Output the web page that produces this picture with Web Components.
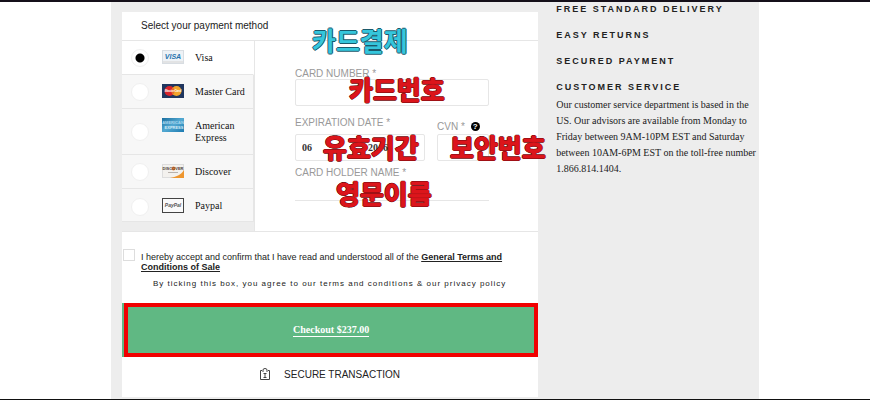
<!DOCTYPE html>
<html lang="en">
<head>
<meta charset="utf-8">
<meta name="viewport" content="width=device-width, initial-scale=1">
<title>Checkout</title>
<style>
  * { box-sizing: border-box; }
  body {
    margin: 0;
    background: #fff;
    color: #222;
    font-family: "Liberation Sans", Arial, sans-serif;
    font-size: 10px;
    --serif: "Liberation Serif", "Times New Roman", serif;
    --line: #e6e6e6;
    --grey: #ededed;
    --label: #999;
  }
</style>
</head>
<body>
  <checkout-page>
    <checkout-card>
      <span slot="title">Select your payment method</span>
      <payment-methods slot="methods"></payment-methods>
      <card-form slot="form"></card-form>
      <terms-check slot="terms"></terms-check>
      <checkout-button slot="submit">Checkout $237.00</checkout-button>
      <secure-note slot="footer">SECURE TRANSACTION</secure-note>
    </checkout-card>
    <help-list slot="aside">
      <help-item heading="FREE STANDARD DELIVERY"></help-item>
      <help-item heading="EASY RETURNS"></help-item>
      <help-item heading="SECURED PAYMENT"></help-item>
      <help-item heading="CUSTOMER SERVICE">Our customer service department is based in the US. Our advisors are available from Monday to Friday between 9AM-10PM EST and Saturday between 10AM-6PM EST on the toll-free number 1.866.814.1404.</help-item>
    </help-list>
  </checkout-page>

<script>
// Small base: every component only gives its markup
class BaseElement extends HTMLElement {
  constructor() {
    super();
    this.attachShadow({ mode: 'open' })
  }

  connectedCallback() {
    this.shadowRoot.innerHTML = `<style>* { box-sizing: border-box; }</style>${this.render()}`
  }
}

class CheckoutPage extends BaseElement {
  render() {
    return `
    <style>
      :host {
        display: flex;
        min-height: 100vh;
        border-top: 2px solid #15101a;
        border-bottom: 1px solid #111;
        box-sizing: border-box;
      }
      main {
        display: grid;
        grid-template-columns: minmax(0, 17fr) minmax(0, 8fr);
        gap: 18px;
        width: 100%;
        max-width: 648px;
        margin: 0 auto;
        padding: 10px 7px 2px 11px;
        background: var(--grey);
      }
      aside { margin: -9px -6px 0 0; }
    </style>
    <main>
      <slot></slot>
      <aside><slot name="aside"></slot></aside>
    </main>
    `
  }
}

class CheckoutCard extends BaseElement {
  render() {
    return `
    <style>
      :host { display: block; background: #fff; }
      h1 {
        margin: 0;
        padding: 0 19px;
        border-bottom: 1px solid var(--line);
        font-size: 10px;
        font-weight: normal;
        line-height: 28px;
      }
      .payment {
        display: grid;
        grid-template-columns: 132px 1fr;
        border-bottom: 1px solid var(--line);
      }
      .methods { background: var(--grey); }
    </style>
    <h1><slot name="title"></slot></h1>
    <div class="payment">
      <div class="methods"><slot name="methods"></slot></div>
      <slot name="form"></slot>
    </div>
    <slot name="terms"></slot>
    <slot name="submit"></slot>
    <slot name="footer"></slot>
    `
  }
}

class CardLogo extends BaseElement {
  render() {
    const logos = {
      visa: `
        <rect x=".5" y=".5" width="21" height="13" fill="#eef2f6" stroke="#d8dde2"/>
        <rect x="1" y="11" width="20" height="2" fill="#e2e3e4"/>
        <text x="11" y="9" font-size="7" font-weight="bold" font-style="italic" fill="#2672ad" text-anchor="middle">VISA</text>`,
      master: `
        <rect width="22" height="14" fill="#20365f"/>
        <circle cx="7.5" cy="7" r="5" fill="#d8242c"/>
        <circle cx="14.5" cy="7" r="5" fill="#f2a52c"/>
        <path d="M11 3.4a5 5 0 0 1 0 7.2a5 5 0 0 1 0-7.2" fill="#e66b2a"/>
        <text x="11" y="8" font-size="3" font-weight="bold" font-style="italic" fill="#fff" text-anchor="middle">MasterCard</text>`,
      amex: `
        <defs><linearGradient id="g" x1="0" y1="0" x2="1" y2="1"><stop stop-color="#1b6e9f"/><stop offset=".5" stop-color="#53a9d2"/><stop offset="1" stop-color="#1c79b0"/></linearGradient></defs>
        <rect width="22" height="14" fill="url(#g)"/>
        <text x="11" y="6" font-size="4" font-weight="bold" fill="#a9d7ee" text-anchor="middle">AMERICAN</text>
        <text x="12" y="11" font-size="4" font-weight="bold" fill="#d5edf8" text-anchor="middle">EXPRESS</text>`,
      discover: `
        <rect x=".5" y=".5" width="21" height="13" fill="#f3f1ee" stroke="#ddd"/>
        <path d="M22 6v8H8C14 13 19 11 22 6z" fill="#ee962f"/>
        <circle cx="11.5" cy="4.5" r="2" fill="#ee8133"/>
        <text x="11" y="6" font-size="4" font-weight="bold" fill="#4a3a34" text-anchor="middle">DISCOVER</text>
        <path d="M6 8.5h10" stroke="#b8b2ad" stroke-width="1"/>`,
      paypal: `
        <rect x=".5" y=".5" width="21" height="14" fill="#fafafa" stroke="#444"/>
        <text x="11" y="9" font-size="5" font-weight="bold" font-style="italic" fill="#555" text-anchor="middle">PayPal</text>`
    }
    const height = this.getAttribute('type') === 'paypal' ? 15 : 14
    return `
    <style>
      :host { display: block; }
      svg { display: block; font-family: "Liberation Sans", Arial, sans-serif; }
    </style>
    <svg width="22" height="${height}" viewBox="0 0 22 ${height}" aria-hidden="true">${logos[this.getAttribute('type')]}</svg>
    `
  }
}

// All radios live in the same shadow root so they stay one group
class PaymentMethods extends BaseElement {
  render() {
    const methods = [
      ['visa', 'Visa'],
      ['master', 'Master Card'],
      ['amex', 'American Express'],
      ['discover', 'Discover'],
      ['paypal', 'Paypal']
    ]
    const rows = methods.map(([type, name], i) => `
      <label>
        <input type="radio" name="method" value="${type}" ${i === 0 ? 'checked' : ''}>
        <card-logo type="${type}"></card-logo>
        <span>${name}</span>
      </label>`).join('')

    return `
    <style>
      :host { display: block; }
      label {
        display: grid;
        grid-template-columns: 18px 22px 1fr;
        gap: 11px;
        align-items: start;
        padding: 9px 4px 10px 11px;
        border-right: 1px solid var(--line);
        border-bottom: 1px solid var(--line);
        background: #f7f7f7;
        font: 10px/12px var(--serif);
        color: #111;
      }
      label:has(:checked) { background: #fff; border-right-color: #fff; }
      label:last-of-type { padding-bottom: 8px; }
      input {
        appearance: none;
        align-self: center;
        width: 18px;
        height: 18px;
        margin: -2px 0 -4px -2px;
        border: 1px solid #f0f0f0;
        border-radius: 50%;
        background: #fff;
      }
      input:checked { background: radial-gradient(circle, #000 4px, #fff 5px); }
      span { padding-top: 2px; }
    </style>
    ${rows}
    `
  }
}

class CardForm extends BaseElement {
  render() {
    return `
    <style>
      :host {
        display: block;
        position: relative;
        padding: 27px 49px 30px 40px;
        border-left: 1px solid var(--line);
        background: #fff;
      }
      form { display: grid; grid-template-columns: 130px 1fr; column-gap: 12px; }
      .wide { grid-column: 1 / -1; }
      label, legend {
        display: block;
        padding: 0;
        font-size: 10px;
        line-height: 11px;
        color: var(--label);
        white-space: nowrap;
      }
      fieldset { margin: 0; padding: 0; border: 0; min-width: 0; }
      input, .selects {
        display: block;
        width: 100%;
        height: 27px;
        border: 1px solid var(--line);
        border-radius: 2px;
        background: #fff;
      }
      .number { margin-bottom: 11px; }
      .selects { display: flex; margin: 6px 0; padding-left: 6px; }
      .selects select {
        appearance: none;
        flex: 1;
        min-width: 0;
        padding: 0;
        border: 0;
        background: none;
        font: bold 10px/12px var(--serif);
        color: #333;
      }
      .selects svg { align-self: center; width: 8px; height: 5px; margin-right: 12px; }
      .selects select:first-child { flex: none; width: 46px; }
      .cvn { display: flex; align-items: center; gap: 6px; height: 17px; padding-top: 2px; }
      .cvn button {
        width: 9px;
        height: 9px;
        padding: 0;
        border: 0;
        border-radius: 50%;
        background: #000;
        color: #fff;
        font: bold 8px/9px "Liberation Sans", Arial, sans-serif;
      }
      .holder { height: 23px; border-width: 0 0 1px; border-radius: 0; }
      /* notes drawn over the fields */
      call-out { position: absolute; }
      .n1 { left: 57px; top: -19px; }
      .n2 { left: 94px; top: 30px; }
      .n3 { left: 68px; top: 88px; }
      .n4 { left: 195px; top: 88px; }
      .n5 { left: 81px; top: 134px; }
    </style>
    <form>
      <div class="wide">
        <label for="number">CARD NUMBER *</label>
        <input id="number" class="number" inputmode="numeric">
      </div>
      <fieldset>
        <legend>EXPIRATION DATE *</legend>
        <div class="selects">
          <select aria-label="Month"><option>06</option></select>
          <svg viewBox="0 0 8 5"><path d="M1 1l3 3 3-3" fill="none" stroke="#777"/></svg>
          <select aria-label="Year"><option>2016</option></select>
        </div>
      </fieldset>
      <div>
        <div class="cvn"><label for="cvn">CVN *</label><button type="button" aria-label="Help">?</button></div>
        <input id="cvn" inputmode="numeric">
      </div>
      <div class="wide">
        <label for="holder">CARD HOLDER NAME *</label>
        <input id="holder" class="holder">
      </div>
    </form>
    <call-out class="n1" tone="blue">카드결제</call-out>
    <call-out class="n2">카드번호</call-out>
    <call-out class="n3">유효기간</call-out>
    <call-out class="n4">보안번호</call-out>
    <call-out class="n5">영문이름</call-out>
    `
  }
}

class CallOut extends BaseElement {
  render() {
    const blue = this.getAttribute('tone') === 'blue'
    return `
    <style>
      :host {
        --fill: ${blue ? '#35c6dc' : '#dc151b'};
        --edge: ${blue ? '#1b5a6c' : '#4a0c10'};
        display: block;
        font: bold 26px/36px "Noto Sans CJK KR", sans-serif;
        color: var(--fill);
        -webkit-text-stroke: ${blue ? '0' : '1px'} var(--fill);
        text-shadow: 1px 0 var(--edge), -1px 0 var(--edge), 0 1px var(--edge), 0 -1px var(--edge);
        white-space: nowrap;
        pointer-events: none;
      }
    </style>
    <slot></slot>
    `
  }
}

class TermsCheck extends BaseElement {
  render() {
    return `
    <style>
      :host { display: block; padding: 17px 17px 13px 1px; }
      .row { display: flex; gap: 6px; align-items: start; }
      input {
        appearance: none;
        flex: none;
        width: 12px;
        height: 12px;
        margin: 0;
        border: 1px solid #ddd;
        background: #fff;
      }
      input:checked { background: #222; }
      label { padding-top: 3px; font-size: 9px; line-height: 10px; }
      a { color: #222; font-weight: bold; }
      p { margin: 6px 0 0 30px; font-size: 8px; line-height: 12px; letter-spacing: 1px; }
    </style>
    <div class="row">
      <input type="checkbox" id="terms">
      <label for="terms">I hereby accept and confirm that I have read and understood all of the <a href="#terms">General Terms and Conditions of Sale</a></label>
    </div>
    <p>By ticking this box, you agree to our terms and conditions &amp; our privacy policy</p>
    `
  }
}

class CheckoutButton extends BaseElement {
  render() {
    return `
    <style>
      :host { display: block; padding-left: 2px; background: linear-gradient(90deg, #60b883 2px, #fff 2px); }
      button {
        display: block;
        width: 100%;
        height: 54px;
        border: 4px solid #f00000;
        background: #60b883;
        color: #fff;
        font: bold 10px/12px var(--serif);
      }
      span { display: inline-block; border-bottom: 1px solid #fff; }
    </style>
    <button type="button"><span><slot></slot></span></button>
    `
  }
}

class SecureNote extends BaseElement {
  render() {
    return `
    <style>
      :host {
        display: flex;
        align-items: center;
        justify-content: center;
        gap: 14px;
        height: 34px;
      }
    </style>
    <svg width="10" height="12" viewBox="0 0 10 12" fill="none" stroke="#444" aria-hidden="true">
      <path d="M2 2.5H.5v9h9v-9H8M3 4V2a2 1.5 0 0 1 4 0V4M5 5v5M3.5 5.5h3M3.5 9.5h3"/>
    </svg>
    <slot></slot>
    `
  }
}

class HelpList extends BaseElement {
  render() {
    return `
    <style>
      :host { display: grid; gap: 14px; }
    </style>
    <slot></slot>
    `
  }
}

class HelpItem extends BaseElement {
  render() {
    return `
    <style>
      :host { display: block; font: 10px/16px var(--serif); color: #222; }
      h2 {
        margin: 0;
        font: bold 9px/12px "Liberation Sans", Arial, sans-serif;
        letter-spacing: 2px;
        color: #222;
      }
      p { margin: 0; padding-top: 4px; }
    </style>
    <h2>${this.getAttribute('heading')}</h2>
    ${this.textContent.trim() ? '<p><slot></slot></p>' : ''}
    `
  }
}

customElements.define('checkout-page', CheckoutPage)
customElements.define('checkout-card', CheckoutCard)
customElements.define('card-logo', CardLogo)
customElements.define('payment-methods', PaymentMethods)
customElements.define('call-out', CallOut)
customElements.define('card-form', CardForm)
customElements.define('terms-check', TermsCheck)
customElements.define('checkout-button', CheckoutButton)
customElements.define('secure-note', SecureNote)
customElements.define('help-list', HelpList)
customElements.define('help-item', HelpItem)
</script>
</body>
</html>
